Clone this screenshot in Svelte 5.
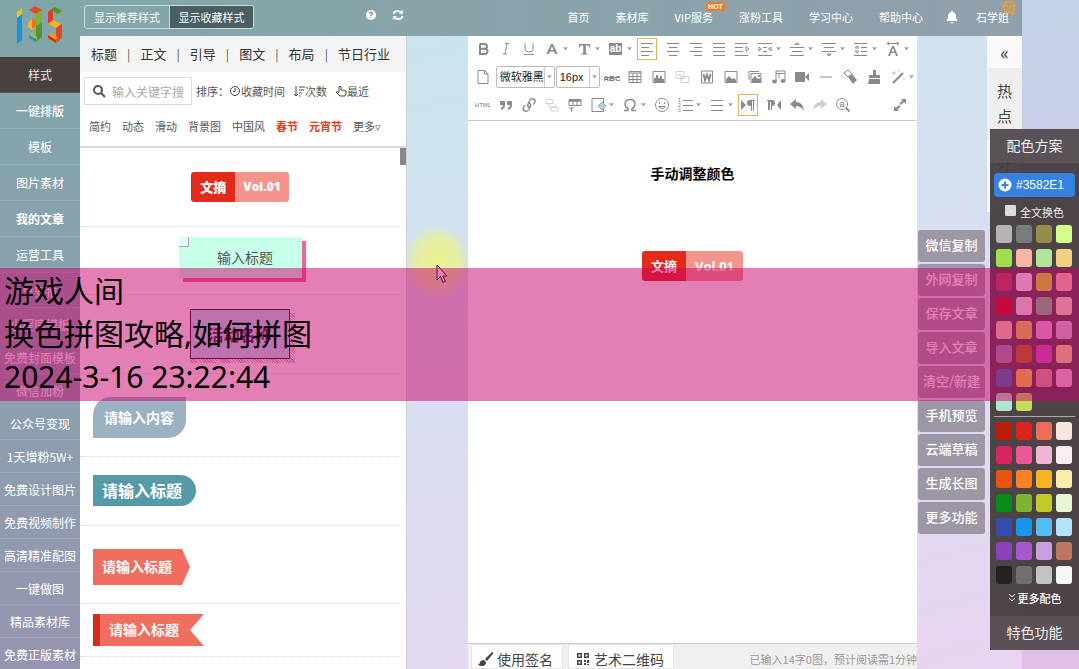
<script>
  const side = ['一键排版', '模板', '图片素材', '我的文章', '运营工具'];
  const sideMore = ['早安推', '小程序模板', '免费封面模板', '微信加粉', '公众号变现', '1天增粉5W+', '免费设计图片', '免费视频制作', '高清精准配图', '一键做图', '精品素材库', '免费正版素材'];
  const tabs = ['标题', '正文', '引导', '图文', '布局', '节日行业'];
  const cats = ['简约', '动态', '滑动', '背景图', '中国风', '春节', '元宵节', '更多▿'];
  const nav = ['首页', '素材库', 'VIP服务', '涨粉工具', '学习中心', '帮助中心'];
  const actions = ['微信复制', '外网复制', '保存文章', '导入文章', '清空/新建', '手机预览', '云端草稿', '生成长图', '更多功能'];
  const recent = ['#b4b4b4', '#767d7c', '#948b4c', '#d5fd8c', '#a2dc4f', '#fab5a2', '#b2e49c', '#f1d084', '#ae485c', '#f2f2ff', '#ceee1c', '#fcc6b2', '#c20e08', '#eee8f0', '#6ad084', '#f4e4c2', '#f6d0b0', '#eed444', '#f0aae0', '#d2c4dc', '#9694a8', '#b4720c', '#c858b8', '#f0dc88', '#2e74ac', '#f6d834', '#daa094', '#eec4dc', '#ace6cc', '#c4dc5a'];
  const palette = ['#bd1d0c', '#db241d', '#ef6c5b', '#f3e6dc', '#d5245f', '#ed5794', '#f0b6d3', '#f8eef3', '#e9540f', '#fd8124', '#f9b426', '#fbecac', '#0b8a1c', '#7eb533', '#c2cb2c', '#e8f6d2', '#354bb0', '#1c95ec', '#55bef9', '#b2e3fb', '#8a42bc', '#a657cc', '#cba0e2', '#bd7660', '#222222', '#707070', '#c3c3c3', '#f7f7f7'];
  const row1 = [['bold', 'B'], ['italic', 'I'], ['underline', 'U'], ['color', 'A', 1], ['type', 'T', 1], ['mark', 'ab', 1], ['left', '左对齐', 0, 1], ['center', '居中'], ['right', '右对齐'], ['justify', '两端对齐'], ['indent', '缩进'], ['both', '两侧缩进', 1], ['before', '段前距', 1], ['after', '段后距', 1], ['line', '行距', 1], ['spacing', '字距', 1]];
  const row2 = [['abc', '删除线'], ['table', '表格'], ['chart', '图表'], ['wechat', '截图'], ['word', 'Word'], ['image', '图片'], ['images', '多图'], ['music', '音乐'], ['video', '视频'], ['hr', '分隔线'], ['eraser', '清除'], ['brush', '格式刷'], ['wand', '魔法棒', 1]];
  const row3 = [['html', 'HTML'], ['quote', '引用'], ['link', '链接'], ['unlink', '取消链接'], ['ttable', '表格标题'], ['page', '页面背景', 1], ['omega', '特殊字符', 1], ['smile', '表情'], ['ol', '有序列表', 1], ['ul', '无序列表', 1], ['ltr', '从左到右', 0, 1], ['rtl', '从右到左'], ['undo', '撤销'], ['redo', '重做'], ['find', '查找'], ['full', '全屏']];
  const paths = {
    bold: 'M5 3h4q3 0 3 2.400t-3 2.400H5h4q3.500 0 3.500 2.600T9 13H5V3',
    italic: 'M7 2.500h4M9 2.500L7 13M5 13h4',
    underline: 'M4 2v6q0 3 4 3t4-3V2M3 13.500h10',
    left: 'M2 2.500h12M2 6.500h8M2 10.500h12M2 14.500h8',
    center: 'M2 2.500h12M4 6.500h8M2 10.500h12M4 14.500h8',
    right: 'M2 2.500h12M6 6.500h8M2 10.500h12M6 14.500h8',
    justify: 'M2 2.500h12M2 6.500h12M2 10.500h12M2 14.500h12',
    indent: 'M1 2.500h13M1 6.500h8M1 10.500h8M1 14.500h13M12 5.500l3 2.500-3 2.500z',
    both: 'M1 2.500h14M6 6.500h4M6 10.500h4M1 14.500h14M2 6l2.500 2L2 10zM14 6l-2.500 2 2.500 2z',
    before: 'M1 6.500h14M3 10.500h10M1 14.500h14M6 3.500l2-2 2 2z',
    after: 'M1 2.500h14M3 6.500h10M1 10.500h14M6 13l2 2 2-2z',
    line: 'M1 2.500h13M8 6.500h6M8 10.500h6M1 14.500h13M2 7l2-2 2 2zM2 10l2 2 2-2z',
    table: 'M2 2.500h12v11H2zM2 4h12M2 7.500h12M2 10.500h12M6 4v9.500M10 4v9.500',
    chart: 'M2 2.500h12v11H2z', image: 'M2 2.500h12v11H2z',
    images: 'M4 4.500h10v9H4zM2 11V2.500h10',
    wechat: 'M1 2.500h8v7H1zM6 7.500h8v6H6zM3 5l1 2 1-2 1 2',
    word: 'M2.500 2h11v12h-11z',
    hr: 'M2 8h12',
    doc: 'M3 1.500h6.500L13 5v9.500H3zM9.500 1.500V5H13',
    page: 'M13.500 6V1.500H2v13h11.500V12',
    unlink: 'M2 2.500h7v4H2zM7 10.500h7v3.500H7zM5 7v3h6V7',
    ttable: 'M2 2.500h12v6H2zM2 4h12M6 4v4.500M10 4v4.500',
    ol: 'M6 3.500h10M6 8.500h10M6 13.500h10', ul: 'M2 3.500h12M2 8.500h12M2 13.500h12',
    smile: 'M8 1.500a6.500 6.500 0 1 0 .1 0M5.500 5v2M10.500 5v2M4.500 9.500q3.500 4 7 0z',
    find: 'M7 1.500a5.500 5.500 0 1 0 .1 0',
    music: 'M5 12V2h9v9M5 4.500h9M8 4.500v5'
  };
</script>

{#snippet caret()}<svg class="caret" viewBox="0 0 6 4" aria-hidden="true"><path d="M0 0h6L3 4z" /></svg>{/snippet}

{#snippet icon(n)}
  <svg class="ic" viewBox="0 0 16 16" class:faint={n === 'wechat' || n === 'unlink' || n === 'redo'} class:thick={n === 'bold'} aria-hidden="true">
    {#if paths[n]}<path d={paths[n]} />{/if}
    {#if n === 'color'}<path class="f" d="M2.500 13L7 3h2l4.500 10h-2.300l-1-2.500H5.800l-1 2.500zM6.500 9h3L8 5.200z" />
    {:else if n === 'type'}<path class="f" d="M3 3h11v3.500h-1L12.500 4.500H9.800V12l1.700 .5V13.500h-6v-1l1.700-.5V4.500H4.500L4 6.500H3z" />
    {:else if n === 'mark'}<rect class="f" x="1" y="2" width="13" height="12" /><text class="w" x="7.500" y="11" font-size="10" text-anchor="middle">ab</text>
    {:else if n === 'spacing'}<path d="M2 2.500h12M4 1L2 2.500 4 4M12 1l2 1.500L12 4" /><path class="f" d="M3 15L7 5h2l4 10h-2l-1-3H6l-1 3zM6.500 10.500h3L8 7z" />
    {:else if n === 'abc'}<text x="8" y="12" font-size="8" text-anchor="middle" font-weight="bold">ABC</text><path d="M0 8.500h16" />
    {:else if n === 'chart'}<path class="f" d="M3 13V9h2V6h2v3h2V7h2v3h2v3z" />
    {:else if n === 'word'}<path class="b" d="M4.500 5l1.500 6L8 6l2 5 1.500-6" />
    {:else if n === 'image'}<path class="f" d="M3 13v-3l3-3 3 3 2-1 2 2v2z" />
    {:else if n === 'images'}<path class="f" d="M5 13v-3l3-3 3 3 3-1v4zM11 6h2v2h-2z" />
    {:else if n === 'music'}<ellipse class="f" cx="3.500" cy="12.500" rx="2.500" ry="2" /><ellipse class="f" cx="12" cy="12" rx="2.500" ry="2" />
    {:else if n === 'video'}<path class="f" d="M1 3h10v10H1zM11 8l4-4v8z" />
    {:else if n === 'eraser'}<path d="M2 4l4-3 4 4-4 3z" /><path class="f" d="M6 8l4-3 5 6-4 4z" />
    {:else if n === 'brush'}<path class="f" d="M7 1h3v5h4v3H3V6h4zM3 10h11v5H2z" />
    {:else if n === 'wand'}<path class="b" d="M3 14L13 4" /><path d="M4 2v4M2 4h4M9 1v2M14 9v2" opacity=".5" />
    {:else if n === 'html'}<text x="8" y="10" font-size="6" text-anchor="middle">HTML</text>
    {:else if n === 'quote'}<path class="f" d="M2 4h5v4q0 4-4 5v-2q2-1 2-3H2zM9 4h5v4q0 4-4 5v-2q2-1 2-3H9z" />
    {:else if n === 'link'}<path class="m" d="M8.500 10.500q-2.500-1-1.500-3.500l2-4q1.500-2 3.500-1t1.500 3L12.500 7.500M7.500 5.500Q10 6.500 9.500 9l-1.500 3.500q-1.500 2.500-4 1.500t-1.500-3.500L4 8" />
    {:else if n === 'ttable'}<path class="f" d="M2 2h12v2.500H2z" /><path d="M2 11h5M4.500 11v4" />
    {:else if n === 'page'}<path class="aqua" d="M12 5l4 4-4 4-4-4z" />
    {:else if n === 'omega'}<path class="m" d="M2 13.500h4v-2Q3 10 3 7q0-4.500 5-4.500T13 7q0 3-3 4.500v2h4" />
    {:else if n === 'ol'}<text x="1" y="5" font-size="5">1</text><text x="1" y="10" font-size="5">2</text><text x="1" y="15" font-size="5">3</text>
    {:else if n === 'ltr'}<path class="f" d="M1 3l5 5-5 5zM10 9a3 3 0 0 1 0-6h5v1h-1v10h-1V4h-1v10h-1V9z" />
    {:else if n === 'rtl'}<path class="f" d="M15 3l-4 5 4 5zM1 3h5a3 3 0 0 1 0 6v4H5V5H4v8H2V4H1z" />
    {:else if n === 'undo'}<path class="f" d="M1 7l6-5v3q7 0 8 9-3-5-8-5v3z" />
    {:else if n === 'redo'}<path class="f" d="M15 7L9 2v3Q2 5 1 14q3-5 8-5v3z" />
    {:else if n === 'find'}<path class="b" d="M11 11l3.500 3.500" /><text x="7" y="10" font-size="9" text-anchor="middle">a</text>
    {:else if n === 'full'}<path class="f" d="M9 2h5v5l-2-2-3 3-1.500-1.500 3-3zM2 9l2 2 3-3 1.500 1.500-3 3L7 14H2z" />{/if}
  </svg>
{/snippet}

{#snippet tool(t)}
  <button class="tool" class:drop={t[2]} class:on={t[3]} class:last={t[0] === 'full'} aria-label={t[1]}>{@render icon(t[0])}{#if t[2]}{@render caret()}{/if}</button>
{/snippet}

<div class="page">
  <div class="app">
    <aside class="side">
      <div class="logo">
        <svg viewBox="0 0 48 42" aria-label="135">
          <path fill="#f6c414" d="M1 7l5-4v6l-5 4z" /><path fill="#1695dc" d="M1 13l5-4v26l-5 4z" />
          <path fill="#df4a22" d="M13 5l6-4 7 4-6 4z" /><path fill="#79b530" d="M20 9l6-4v13l-6 3z" /><path fill="#f5b81c" d="M12 18l4-4 4 3v6l-4 2-4-3z" /><path fill="#e87422" d="M16 14l4-1v9l-4 2z" /><path fill="#519438" d="M20 21l6-3v14l-6 5z" /><path fill="#9cc83a" d="M13 30l3-2 5 4-1 5-7-4z" /><path fill="#1f8fd0" d="M13 33l7 4v-3l-7-4z" />
          <path fill="#e63925" d="M32 7l5-4v12l-5 4z" /><path fill="#4d9139" d="M35 5l4-3 7 4-4 3z" /><path fill="#8cb832" d="M42 9l4-3v3l-4 2z" /><path fill="#f4b51a" d="M32 19l5-4 8 4-4 4z" /><path fill="#e44625" d="M40 23l6-4v14l-6 5z" /><path fill="#f0a020" d="M32 30l4-2 5 4-1 6-8-5z" /><path fill="#c93020" d="M32 33l8 5v-3l-8-5z" />
        </svg>
      </div>
      <a class="item current" href="#style">样式</a>
      {#each side as s}<a class="item" class:semi={s === '一键排版'} class:strong={s === '我的文章'} href="#side">{s}</a>{/each}
      <div class="more">{#each sideMore as s}<a class="item short" href="#side">{s}</a>{/each}</div>
    </aside>

    <div class="main">
      <header class="top">
        <div class="toggle"><button>显示推荐样式</button><button class="sel">显示收藏样式</button></div>
        <button class="round help" aria-label="帮助"><svg viewBox="0 0 12 12"><circle cx="6" cy="6" r="5" fill="#fff" /><path d="M4.500 4.800Q4.500 3.200 6 3.200t1.500 1.500Q7.500 5.500 6 6v1M6 8v1.200" fill="none" stroke="#788f94" stroke-width="1.300" /></svg></button>
        <button class="round" aria-label="刷新"><svg viewBox="0 0 12 12"><path d="M1.500 5Q2 2 6 2q2 0 3.500 1.500M10.500 7Q10 10 6 10q-2 0-3.500-1.500" fill="none" stroke="#fff" stroke-width="1.800" /><path fill="#fff" d="M11 1v4H7zM1 11V7h4z" /></svg></button>
        <nav>
          {#each nav as n}<a href="#nav">{n}{#if n === 'VIP服务'}<b class="hot">HOT</b>{/if}</a>{/each}
          <svg class="bell" viewBox="0 0 12 14" aria-label="通知"><path fill="#fff" d="M5 1h2v1q3 1 3 4 0 4 2 5H0q2-1 2-5 0-3 3-4zM4.500 12h3L6 13.500z" /></svg>
          <a href="#user">石学姐<svg class="medal" viewBox="0 0 14 16"><circle cx="7" cy="7" r="5.500" fill="none" stroke="#ee9c22" stroke-width="2" /><path d="M4.500 4.500L7 9.500l2.500-5M4 12l-1 3M10 12l1 3" fill="none" stroke="#ee9c22" stroke-width="1.500" /></svg></a>
        </nav>
      </header>

      <div class="cols">
        <section class="styles">
          <div class="tabs">{#each tabs as t, i}{#if i}<i>|</i>{/if}<a href="#tab">{t}</a>{/each}</div>
          <div class="search">
            <label class="box"><svg viewBox="0 0 14 14" aria-label="搜索"><circle cx="6" cy="6" r="4" /><path d="M9 9l4 4" /></svg><input placeholder="输入关键字搜索" /></label>
            <span class="sort">排序：</span>
            <a href="#sort"><svg viewBox="0 0 12 12"><circle cx="6" cy="6" r="4.500" /><path d="M6 3v3.500H4" /></svg>收藏时间</a>
            <a href="#sort"><svg viewBox="0 0 12 12"><path d="M3 1v10M1 9l2 2 2-2M6 2h6M6 5h5M6 8h3M6 11h1.500" /></svg>次数</a>
            <a href="#sort"><svg viewBox="0 0 12 12"><path d="M4 7V2q1-2 2 0v3q4 0 5 1v3l-1 2H5L1 7q1-1 3 1" /></svg>最近</a>
          </div>
          <div class="cats">{#each cats as c}<a class:red={c === '春节' || c === '元宵节'} href="#cat">{c}</a>{/each}</div>
          <div class="list">
            <div class="thumb"></div>
            <div class="row mid r1"><span class="vol"><b>文摘</b><b class="n">Vol.01</b></span></div>
            <div class="row mid r2"><div class="mint"><span>输入标题</span></div></div>
            <div class="row mid r3"><div class="hatch"><span>活动名称</span></div></div>
            <div class="row r4"><span class="leaf">请输入内容</span></div>
            <div class="row r5"><span class="pill">请输入标题</span></div>
            <div class="row r6"><span class="arrow">请输入标题</span></div>
            <div class="row r7"><span class="flag">请输入标题</span></div>
          </div>
        </section>

        <section class="editor">
          <div class="tools">
            <div class="line">{#each row1 as t}{@render tool(t)}{/each}</div>
            <div class="line spread">
              <button class="tool" aria-label="新建">{@render icon('doc')}</button>
              <label class="pick font"><select aria-label="字体"><option>微软雅黑</option></select>{@render caret()}</label>
              <label class="pick"><select aria-label="字号"><option>16px</option></select>{@render caret()}</label>
              {#each row2 as t}{@render tool(t)}{/each}
            </div>
            <div class="line">{#each row3 as t}{@render tool(t)}{/each}</div>
          </div>
          <article>
            <h1>手动调整颜色</h1>
            <span class="vol large"><b>文摘</b><b class="n">Vol.01</b></span>
          </article>
          <footer>
            <button><svg viewBox="0 0 16 16"><path d="M15 1q1 1-1 3L9 10 7 8l6-6q1-1 2-1zM6 9l2 2q0 4-4 4-2 0-4-1 2-1 2-3 1-2 4-2z" /></svg>使用签名</button>
            <button><svg viewBox="0 0 16 16"><path fill-rule="evenodd" d="M2 2h5v5H2zM3.500 3.500v2h2v-2zM9 2h5v5H9zM10.500 3.500v2h2v-2zM2 9h5v5H2zM3.500 10.500v2h2v-2zM9 9h2v2H9zM12 9h2v3h-2zM9 12h2v2H9zM12 13h2v1h-2z" /></svg>艺术二维码</button>
            <span>已输入14字0图，预计阅读需1分钟</span>
          </footer>
        </section>

        <div class="actions">{#each actions as a}<button>{a}</button>{/each}</div>

        <div class="strip"><button class="fold">«</button><a class="grey" href="#hot">热<br />点</a><a href="#good">好<br />文</a></div>
      </div>
    </div>
  </div>

  <div class="colors">
    <h2>配色方案</h2>
    <button class="pickcolor"><svg viewBox="0 0 14 14"><circle cx="7" cy="7" r="6.500" fill="#fff" /><path d="M7 3.500v7M3.500 7h7" stroke="#3582e1" stroke-width="2" /></svg>#3582E1</button>
    <label class="all"><input type="checkbox" />全文换色</label>
    <div class="grid">{#each recent as c}<button style:background={c} aria-label={c}></button>{/each}</div>
    <hr />
    <div class="grid">{#each palette as c}<button style:background={c} aria-label={c}></button>{/each}</div>
    <button class="morecolor"><svg viewBox="0 0 8 10"><path d="M1 1l3 3 3-3M1 5l3 3 3-3" /></svg>更多配色</button>
    <button class="special">特色功能</button>
  </div>

  <div class="glow"></div>
  <svg class="cursor" viewBox="0 0 12 20"><path d="M1 1v15l3.500-3.500L7 18.500l2.500-1L7 12h4z" fill="#fff" stroke="#111" /></svg>
  <div class="banner">游戏人间<br />换色拼图攻略,如何拼图<br />2024-3-16 23:22:44</div>
</div>

<style>
  :global(body) { margin: 0; overflow: hidden; }
  .page { position: relative; height: 100vh; overflow: hidden; display: flex; padding-right: 57px; box-sizing: border-box; background: linear-gradient(175deg, #bfd6e8, #e1bfe8); font: 12px "Noto Sans CJK SC", sans-serif; color: #333; }
  .page :global(*) { box-sizing: border-box; }
  a { color: inherit; text-decoration: none; }
  button { font: inherit; color: inherit; border: 0; background: none; padding: 0; }
  .app { flex: 1; min-width: 0; display: flex; background: linear-gradient(165deg, #c4e8ee, #d5e0f0 45%, #e9d5f1); }
  .side { width: 80px; flex: none; background: linear-gradient(#81a6a9, #8b9fae 60%, #9695b0); color: #fff; overflow: hidden; }
  .logo { height: 57px; padding: 5px 0 0 16px; }
  .logo svg { width: 48px; height: 42px; }
  .item { display: block; height: 36px; line-height: 35px; text-align: center; white-space: nowrap; border-bottom: 1px solid rgba(255, 255, 255, .12); }
  .item.current { background: #4b4040; color: #e8e4e4; }
  .item.short { height: 33px; line-height: 33px; }
  .semi { font-weight: 500; }
  .strong { font-weight: bold; }
  .more { padding-top: 2px; }
  .main { flex: 1; min-width: 0; display: flex; flex-direction: column; }
  .top { height: 36px; flex: none; display: flex; align-items: center; padding: 0 13px 2px 4px; background: linear-gradient(90deg, #82a7aa, #91a0ad); color: #fff; font-size: 11px; }
  .toggle { display: flex; height: 24px; border: 1px solid #c9dadb; border-radius: 3px; overflow: hidden; }
  .toggle button { width: 84px; }
  .toggle .sel { background: #4b5e62; border-left: 1px solid #c9dadb; }
  .round { width: 12px; height: 12px; margin: 0 0 4px 15px; }
  .round.help { margin-left: 111px; }
  .round svg { display: block; width: 12px; height: 12px; }
  nav { display: flex; align-items: center; gap: 26px; margin-left: auto; }
  nav a { position: relative; white-space: nowrap; }
  .bell { width: 12px; height: 14px; margin: 0 -8px 0 -3px; }
  .hot { position: absolute; top: -7px; right: -12px; width: 19px; height: 9px; border-radius: 2px; background: #f17b20; font: bold 7px/9px "Liberation Sans", sans-serif; text-align: center; }
  .medal { position: absolute; top: -9px; right: -7px; width: 14px; height: 16px; }
  .cols { flex: 1; min-height: 0; display: flex; }
  .styles { width: 327px; flex: none; background: #fff; border-right: 1px solid #ccd0d4; display: flex; flex-direction: column; }
  .tabs { height: 36px; flex: none; display: flex; align-items: center; justify-content: space-between; padding: 0 16px 2px 11px; background: #f4f4f4; font-size: 13px; }
  .tabs i { font-style: normal; color: #555; font-size: 12px; }
  .search { display: flex; align-items: center; gap: 8px; padding: 5px 4px; font-size: 11px; color: #555; white-space: nowrap; }
  .search a { display: flex; align-items: center; }
  .search a svg { width: 12px; height: 12px; fill: none; stroke: #444; }
  .box { display: flex; align-items: center; width: 108px; height: 28px; border: 1px solid #ddd; padding: 0 8px 0 7px; }
  .box svg { width: 14px; height: 14px; flex: none; fill: none; stroke: #555; stroke-width: 2; }
  .box input { min-width: 0; flex: 1; border: 0; outline: 0; background: none; padding: 0 0 0 6px; font: inherit; font-size: 12px; }
  .box input::placeholder { color: #aaa; }
  .sort { margin: 0 -8px 0 -4px; }
  .cats { display: flex; gap: 11px; padding: 8px 9px 11px; font-size: 11px; line-height: 17px; color: #555; white-space: nowrap; border-bottom: 2px solid #ddd; }
  .red { color: #e83a17; font-weight: bold; }
  .list { position: relative; flex: 1; min-height: 0; overflow: hidden; padding-right: 6px; }
  .thumb { position: absolute; right: 0; top: 0; width: 6px; height: 17px; background: #888; }
  .row { border-bottom: 1px dotted #d8d8d8; display: flex; align-items: flex-start; padding-left: 13px; color: #fff; font-weight: bold; }
  .row.mid { justify-content: center; padding-left: 0; }
  .r1 { height: 79px; padding-top: 24px; }
  .r2 { height: 68px; padding-top: 10px; }
  .row.r3 { height: 79px; padding: 14px 0 0 4px; }
  .r4 { height: 83px; padding-top: 23px; }
  .r5 { height: 69px; padding-top: 18px; }
  .r6 { height: 78px; padding-top: 23px; }
  .r7 { height: 53px; padding-top: 10px; }
  .vol { display: inline-flex; border-radius: 3px; overflow: hidden; height: 30px; line-height: 29px; color: #fff; font-size: 13px; }
  .vol b { padding: 0 9px; background: #e42a1a; }
  .vol .n { padding: 0 8px; background: #f3958c; font-family: "Open Sans", sans-serif; font-size: 12px; line-height: 30px; }
  .vol.large .n { padding: 0 9px; font-size: 13px; }
  .mint { position: relative; width: 123px; height: 41px; line-height: 40px; text-align: center; padding-left: 10px; background: #c7ffe9; box-shadow: 4px 4px 0 #f06298; color: #555; font-weight: normal; font-size: 14px; }
  .mint::before { content: ""; position: absolute; left: 0; top: 0; width: 9px; height: 9px; background: #e2fff6; border-right: 1px solid #b89bb4; border-bottom: 1px solid #b89bb4; }
  .hatch { width: 105px; height: 54px; padding: 0 5px 4px 0; background: linear-gradient(#fff, #fff) right top / 5px 4px no-repeat, repeating-linear-gradient(45deg, #c8b4c4 0 1px, #fff 1px 2px); color: #4a1440; font-size: 16px; }
  .hatch span { display: block; height: 50px; line-height: 48px; background: #b2e6f4; border: 1px solid #2a0c24; text-align: center; }
  .leaf { height: 41px; line-height: 41px; padding: 0 12px 0 11px; border-radius: 18px 0; background: #9ab2c1; font-size: 14px; }
  .pill { height: 31px; line-height: 31px; padding: 0 14px 0 9px; border-radius: 0 16px 16px 0; background: #569aaa; font-size: 16px; }
  .arrow { height: 36px; line-height: 34px; padding: 0 18px 0 9px; background: #ef6e5f; clip-path: polygon(0 0, calc(100% - 8px) 0, 100% 50%, calc(100% - 8px) 100%, 0 100%); font-size: 14px; }
  .flag { height: 32px; line-height: 30px; padding: 0 25px 0 9px; border-left: 7px solid #d62c1a; background: #ef6e5f; clip-path: polygon(0 0, 100% 0, calc(100% - 14px) 50%, 100% 100%, 0 100%); font-size: 14px; }
  .editor { flex: 1; min-width: 0; margin-left: 61px; background: #fff; display: flex; flex-direction: column; }
  .tools { flex: none; border-bottom: 1px solid #ccc; color: #888; }
  .line { display: flex; align-items: center; height: 28px; padding: 0 5px 2px 4px; }
  .line.spread { justify-content: space-between; padding-right: 2px; }
  .tool { width: 23px; height: 22px; flex: none; display: flex; align-items: center; padding-left: 3px; }
  .tool.drop { width: 32px; }
  .tool.on { width: 20px; margin-right: 5px; border: 1px solid #dcb25c; padding-left: 1px; }
  .tool.last { margin-left: auto; }
  .ic { width: 16px; height: 16px; flex: none; fill: none; stroke: #8a8a8a; stroke-width: 1; }
  .ic.thick { stroke-width: 2; }
  .ic.faint { opacity: .4; }
  .ic .f { fill: #8a8a8a; stroke: none; }
  .ic .b { stroke-width: 2; }
  .ic .m { stroke-width: 1.4; }
  .ic .aqua { fill: #a5d8e4; stroke: #9ac; }
  .ic text { fill: #777; stroke: none; font-family: "Liberation Sans", sans-serif; }
  .ic .w { fill: #fff; font-weight: bold; }
  .caret { width: 5px; height: 4px; margin-left: 3px; fill: #aaa; flex: none; }
  .spread .drop { width: 28px; }
  .pick { display: flex; align-items: center; flex: none; width: 44px; height: 22px; border: 1px solid #bbb; border-radius: 2px; padding: 0 2px 0 0; }
  .pick.font { width: 59px; }
  .pick select { appearance: none; flex: 1; min-width: 0; height: 100%; border: 0; border-right: 1px solid #ccc; background: none; padding: 0 0 0 3px; font: 11px "Liberation Sans", "Noto Sans CJK SC", sans-serif; color: #222; outline: 0; }
  .pick .caret { margin-left: 2px; }
  article { flex: 1; min-height: 0; display: flex; flex-direction: column; align-items: center; padding-top: 42px; }
  h1 { margin: 0 0 68px; font-size: 14px; line-height: 20px; color: #000; }
  footer { height: 26px; flex: none; display: flex; gap: 5px; padding-left: 3px; border-top: 1px solid #ccc; background: #f0f0f0; font-size: 14px; line-height: 28px; white-space: nowrap; overflow: hidden; }
  footer button { display: flex; align-items: center; gap: 3px; padding: 5px 9px 0 6px; background: #fff; border: 1px solid #e6e6e6; color: #444; }
  footer svg { width: 16px; height: 16px; fill: #444; }
  footer span { margin-left: auto; font-size: 11px; line-height: 30px; color: #999; }
  .actions { width: 70px; flex: none; display: flex; flex-direction: column; gap: 2px; padding: 194px 2px 0 1px; }
  .actions button { height: 32px; flex: none; padding-bottom: 3px; border-radius: 3px; background: #9d97a5; color: #fff; font-size: 13px; font-weight: 500; }
  .strip { width: 35px; flex: none; display: flex; flex-direction: column; font-size: 15px; line-height: 25px; text-align: center; color: #444; }
  .fold { height: 32px; background: #fafafa; font-size: 18px; color: #333; }
  .strip a { height: 72px; padding-top: 10px; background: #f7f7f9; }
  .strip .grey { background: #eee; }
  .colors { position: absolute; right: 0; top: 129px; width: 89px; background: rgba(68, 60, 62, .95); color: #eee; }
  h2 { margin: 0; height: 34px; background: rgba(92, 86, 90, .85); font-weight: normal; font-size: 14px; line-height: 32px; text-align: center; }
  .pickcolor { display: flex; align-items: center; gap: 4px; height: 24px; width: 81px; margin: 10px 4px 7px; padding-left: 4px; border-radius: 4px; background: #3582e1; color: #fff; font: 12px "Liberation Sans", sans-serif; }
  .pickcolor svg { width: 14px; height: 14px; }
  .all { display: flex; align-items: center; gap: 4px; padding-left: 15px; font-size: 11px; height: 16px; }
  .all input { width: 11px; height: 11px; margin: 0 0 4px; appearance: none; background: #ddd; border-radius: 1px; }
  .grid { display: grid; grid-template-columns: repeat(4, 16px); gap: 6px 4px; padding: 5px 6px; }
  .grid button { height: 18px; border-radius: 3px; }
  hr { margin: 0 4px; border: 0; border-top: 1px solid #aaa; }
  .morecolor { display: flex; width: 100%; align-items: center; justify-content: center; gap: 2px; height: 27px; padding-bottom: 9px; font-size: 11px; font-weight: 500; color: #fff; }
  .morecolor svg { width: 8px; height: 10px; fill: none; stroke: #fff; }
  .special { width: 100%; height: 34px; padding-bottom: 2px; background: #5b5056; font-size: 14px; }
  .glow { position: absolute; left: 403px; top: 224px; width: 68px; height: 76px; background: radial-gradient(ellipse, rgba(238, 242, 135, .9) 10%, rgba(232, 240, 150, .8) 45%, transparent 70%); }
  .cursor { position: absolute; left: 436px; top: 264px; width: 12px; height: 20px; }
  .banner { position: absolute; left: 0; right: 0; top: 268px; height: 133px; padding: 1px 4px; background: rgba(202, 0, 108, .5); color: #000; font: 30px/43px "Noto Sans", "Noto Sans CJK SC", sans-serif; white-space: nowrap; pointer-events: none; }
</style>
